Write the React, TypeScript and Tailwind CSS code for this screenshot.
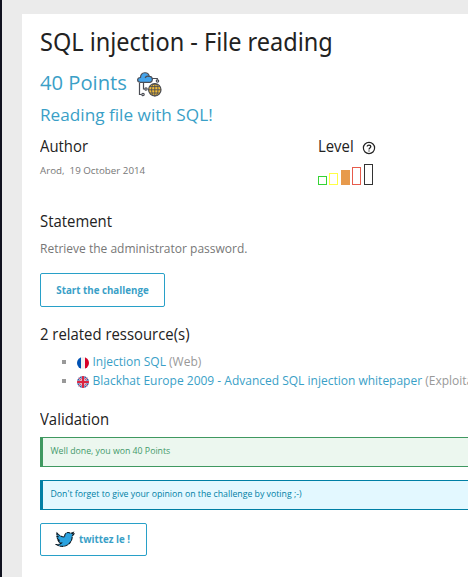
import type { ReactNode } from "react";

function Heading({ children, className = "" }: { children: ReactNode; className?: string }) {
  return (
    <h3 className={`h-6 w-fit origin-left scale-x-[.875] whitespace-nowrap text-[17px] leading-6 text-[#222] ${className}`}>
      {children}
    </h3>
  );
}

function CloudIcon() {
  return (
    <svg width="26" height="26" viewBox="0 0 26 26" fill="none" stroke="#4b4d55" strokeWidth="1.2">
      <path d="M2.5 11v11.5h2M6.5 11v6h1M15 6.5h5.3v1.3" />
      <circle cx="6" cy="22.5" r="1.2" />
      <circle cx="9" cy="17" r="1.2" />
      <circle cx="20.5" cy="9" r="1.2" />
      <path d="M3.2 10.3C-.3 10-.2 5.6 3.5 5.5 3.8-.5 11.2-.7 12.3 4.3c3.5-.2 4.2 5.2.8 6z" fill="#44a4ec" />
      <path d="M8.1 6c.7-1.7 2.7-2.2 4.2-1.6" />
      <circle cx="17.8" cy="17.8" r="6.2" fill="#f4bd35" />
      <path d="M11.6 17.8H24M17.8 11.6V24M12.8 14.6h10M12.8 21h10" strokeWidth=".9" />
      <ellipse cx="17.8" cy="17.8" rx="3.2" ry="6.2" strokeWidth=".9" />
    </svg>
  );
}

function FrenchFlag() {
  return (
    <svg className="mt-[5px] shrink-0" width="12" height="12" viewBox="0 0 12 12">
      <clipPath id="fr"><circle cx="6" cy="6" r="6" /></clipPath>
      <g clipPath="url(#fr)">
        <path fill="#f2f2f2" d="M0 0h12v12H0z" />
        <path fill="#0052b4" d="M0 0h4v12H0z" />
        <path fill="#d80027" d="M8 0h4v12H8z" />
      </g>
    </svg>
  );
}

function BritishFlag() {
  return (
    <svg className="mt-[5px] shrink-0" width="12" height="12" viewBox="0 0 12 12">
      <clipPath id="gb"><circle cx="6" cy="6" r="6" /></clipPath>
      <g clipPath="url(#gb)">
        <path fill="#285aa8" d="M0 0h12v12H0z" />
        <path stroke="#e9c9d6" strokeWidth="1.9" d="M0 0l12 12M12 0L0 12" />
        <path stroke="#df4258" strokeWidth=".9" d="M0 0l12 12M12 0L0 12" />
        <path stroke="#eccdd7" strokeWidth="3" d="M6 0v12M0 6h12" />
        <path stroke="#dc2440" strokeWidth="2" d="M6 0v12M0 6h12" />
      </g>
    </svg>
  );
}

function Bird() {
  return (
    <svg width="20" height="17" viewBox="0 0 20 17">
      <path
        d="M2 2c2 2.5 4.7 3.8 7.7 4C9 2.3 13 .2 15.7 2.5L18.2 1.6l-1 1.8 1.6-.3-1.6 2c.2 6.8-5.8 11-11 10.2-1.9-.2-3.4-.8-4.7-1.7 2 .1 3.6-.4 5-1.6-1.7-.2-2.9-1.1-3.4-2.6h1.5C2.9 8.7 1.9 7.3 1.9 5.5l1.6.5C2.1 4.9 1.6 3.6 2 2z"
        fill="#2ba3e0" stroke="#0b1720" strokeWidth="1.1" strokeDasharray="4 .6"
      />
    </svg>
  );
}

export default function App() {
  return (
    <div className="h-[577px] w-[468px] overflow-hidden border-l-2 border-[#10121f] bg-[#ebebeb] pl-5 pt-3.5 font-['Open_Sans','Noto_Sans',sans-serif]">
      <main className="h-full bg-white pl-[18px] pt-3">
        <h1 className="h-8 w-fit origin-left scale-x-[.94] whitespace-nowrap font-['Noto_Sans','Open_Sans',sans-serif] text-[25px] leading-[30px] text-[#222]">
          SQL injection - File reading
        </h1>
        <div className="mt-2.5 flex h-8 items-start text-[#3a9fc7]">
          <span className="w-[97px] whitespace-nowrap text-[20.2px] leading-[28px]">40 Points</span>
          <span className="mt-1"><CloudIcon /></span>
        </div>
        <h2 className="mt-0.5 h-6 w-fit whitespace-nowrap text-[17.2px] leading-[26px] text-[#3a9fc7]">Reading file with SQL!</h2>

        <section className="mt-2 flex h-[75px]">
          <div className="w-[278px]">
            <Heading>Author</Heading>
            <p className="mt-[3px] whitespace-pre text-[9.75px] leading-5 text-[#777]">Arod,  19 October 2014</p>
          </div>
          <div>
            <div className="flex">
              <Heading className="min-w-[44px]">Level</Heading>
              <svg className="mt-[7px]" width="14" height="14" viewBox="0 0 14 14" fill="none" stroke="#222">
                <circle cx="7" cy="7" r="5.6" strokeWidth="1.2" />
                <path d="M5.2 5.6C5.2 3.5 8.8 3.6 8.8 5.6 8.8 7 7 7 7 8.4M7 9.4v1.2" strokeWidth="1.3" />
              </svg>
            </div>
            <div className="mt-1.5 flex h-[23px] items-end gap-0.5 pb-0.5">
              <i className="h-[9px] w-[9px] border border-[#35d435]" />
              <i className="h-3 w-[9px] border border-[#ffff45]" />
              <i className="ml-px h-[15px] w-[9px] bg-[#e79a4c]" />
              <i className="h-[18px] w-[9px] border border-[#e75b4c]" />
              <i className="ml-px h-[21px] w-[9px] border border-[#333]" />
            </div>
          </div>
        </section>

        <Heading>Statement</Heading>
        <p className="mt-1 h-6 whitespace-nowrap text-[12px] leading-6 text-[#777]">Retrieve the administrator password.</p>
        <button className="mt-3 block h-[34px] w-[125px] rounded-[2px] border border-[#28a0c8] pt-px text-[9.75px] font-bold leading-8 text-[#3a9fc7]">
          Start the challenge
        </button>

        <Heading className="mt-[15px]">2 related ressource(s)</Heading>
        <ul className="mt-1.5 text-[12px] text-[#999]">
          <li className="flex h-[19px] whitespace-nowrap leading-5">
            <i className="ml-[22px] mr-[11px] mt-[8px] h-1 w-1 shrink-0 bg-[#999]" />
            <FrenchFlag />
            <span className="ml-[3.5px]"><a className="text-[#3a9fc7]">Injection SQL</a> (Web)</span>
          </li>
          <li className="flex h-[19px] whitespace-nowrap leading-5">
            <i className="ml-[22px] mr-[11px] mt-[8px] h-1 w-1 shrink-0 bg-[#999]" />
            <BritishFlag />
            <span className="ml-[3.5px]"><a className="text-[#3a9fc7]">Blackhat Europe 2009 - Advanced SQL injection whitepaper</a> (Exploitation)</span>
          </li>
        </ul>

        <Heading className="mt-[17px]">Validation</Heading>
        <div className="mt-1.5 h-[30px] border-y border-l-[3px] border-[#3f9860] bg-[#ecf7ef] pl-[7.5px] text-[8.75px] leading-[26px] text-[#43996a]">
          Well done, you won 40 Points
        </div>
        <div className="mt-[13px] h-[30px] border-y border-l-[3px] border-[#007fa5] bg-[#e3f8ff] pl-[7.5px] text-[8.75px] leading-[26px] text-[#007fa5]">
          Don't forget to give your opinion on the challenge by voting ;-)
        </div>
        <button className="mt-[13px] flex h-[33px] w-[107px] items-center rounded-[2px] border border-[#28a0c8] pl-[14px] text-[9.75px] font-bold text-[#3a9fc7]">
          <Bird /><span className="ml-1 pt-0.5">twittez le !</span>
        </button>
      </main>
    </div>
  );
}
